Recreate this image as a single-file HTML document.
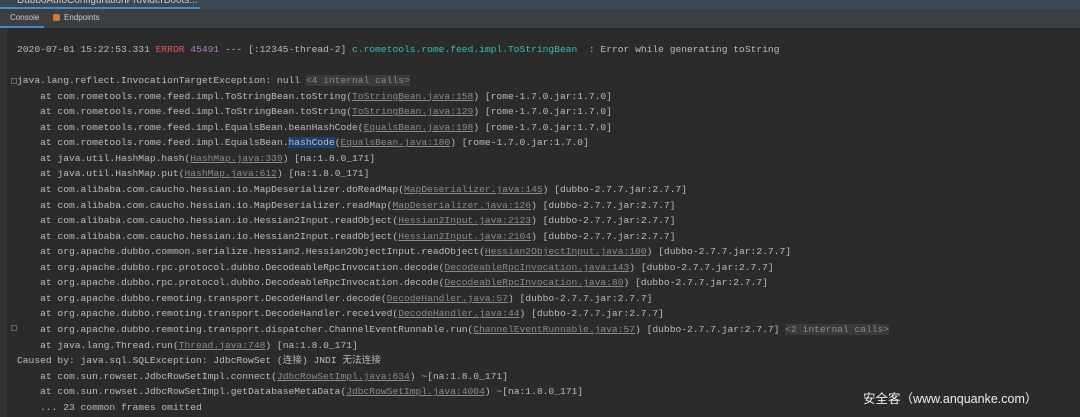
<!DOCTYPE html>
<html><head><meta charset="utf-8"><style>
*{margin:0;padding:0;box-sizing:border-box}
html,body{width:1080px;height:417px;overflow:hidden;background:#2b2b2b}
body{position:relative;font-family:"Liberation Sans",sans-serif}
.title{position:absolute;left:0;top:0;width:1080px;height:9px;background:#3b4754;overflow:hidden}
.title .t{position:absolute;left:17px;top:-5px;font-size:10px;color:#c8ccd0}
.title .ul{position:absolute;left:0;top:7px;width:200px;height:2px;background:#4a88c7}
.tabs{position:absolute;left:0;top:9px;width:1080px;height:19px;background:#3c3f41}
.tabs span{position:absolute;top:4px;font-size:8px;color:#c8ccd0}
.tabs .ul{position:absolute;left:0;top:17px;width:44px;height:2px;background:#4a88c7}
.gut{position:absolute;left:0;top:28px;width:7px;height:389px;background:#313335}
.c{position:absolute;left:17px;top:73px;font-family:"Liberation Mono","Noto Sans CJK SC",monospace;font-size:9.65px;color:#bbbbbb}
.c div{height:15.57px;line-height:15.57px;white-space:pre}
.first{position:absolute;left:17px;top:42px;font-family:"Liberation Mono",monospace;font-size:9.65px;color:#bbbbbb;white-space:pre;line-height:16px}
.r{color:#e0555a}.p{color:#b07fc6}.cy{color:#3fb8b8}
.l{color:#8a8a8a;text-decoration:underline}
.ic{background:#3a3a3a;color:#8a8a8a}
.h{background:#1f3f6c}
.box{position:absolute;width:6px;height:6px;border:1px solid #666}
.wm{position:absolute;left:863px;top:388px;font-family:"Liberation Sans","Noto Sans CJK SC",sans-serif;font-size:12.5px;color:#eee}
</style></head><body>
<div class="title"><span class="t">DubboAutoConfigurationProviderBoots...</span><div class="ul"></div></div>
<div class="tabs"><span style="left:10px">Console</span><span style="left:64px">Endpoints</span><span style="left:53px;top:5px;width:7px;height:7px;background:#d7773a;border-radius:2px"></span><div class="ul"></div></div>
<div class="gut"></div>
<div class="box" style="left:11px;top:78px"></div>
<div class="box" style="left:11px;top:325px"></div>
<div class="first">2020-07-01 15:22:53.331 <span class="r">ERROR</span> <span class="p">45491</span> --- [:12345-thread-2] <span class="cy">c.rometools.rome.feed.impl.ToStringBean</span>  : Error while generating toString</div>
<div class="c"><div>java.lang.reflect.InvocationTargetException: null <span class="ic">&lt;4 internal calls&gt;</span></div><div>    at com.rometools.rome.feed.impl.ToStringBean.toString(<span class="l">ToStringBean.java:158</span>) [rome-1.7.0.jar:1.7.0]</div><div>    at com.rometools.rome.feed.impl.ToStringBean.toString(<span class="l">ToStringBean.java:129</span>) [rome-1.7.0.jar:1.7.0]</div><div>    at com.rometools.rome.feed.impl.EqualsBean.beanHashCode(<span class="l">EqualsBean.java:198</span>) [rome-1.7.0.jar:1.7.0]</div><div>    at com.rometools.rome.feed.impl.EqualsBean.<span class="h">hashCode</span>(<span class="l">EqualsBean.java:180</span>) [rome-1.7.0.jar:1.7.0]</div><div>    at java.util.HashMap.hash(<span class="l">HashMap.java:339</span>) [na:1.8.0_171]</div><div>    at java.util.HashMap.put(<span class="l">HashMap.java:612</span>) [na:1.8.0_171]</div><div>    at com.alibaba.com.caucho.hessian.io.MapDeserializer.doReadMap(<span class="l">MapDeserializer.java:145</span>) [dubbo-2.7.7.jar:2.7.7]</div><div>    at com.alibaba.com.caucho.hessian.io.MapDeserializer.readMap(<span class="l">MapDeserializer.java:126</span>) [dubbo-2.7.7.jar:2.7.7]</div><div>    at com.alibaba.com.caucho.hessian.io.Hessian2Input.readObject(<span class="l">Hessian2Input.java:2123</span>) [dubbo-2.7.7.jar:2.7.7]</div><div>    at com.alibaba.com.caucho.hessian.io.Hessian2Input.readObject(<span class="l">Hessian2Input.java:2104</span>) [dubbo-2.7.7.jar:2.7.7]</div><div>    at org.apache.dubbo.common.serialize.hessian2.Hessian2ObjectInput.readObject(<span class="l">Hessian2ObjectInput.java:100</span>) [dubbo-2.7.7.jar:2.7.7]</div><div>    at org.apache.dubbo.rpc.protocol.dubbo.DecodeableRpcInvocation.decode(<span class="l">DecodeableRpcInvocation.java:143</span>) [dubbo-2.7.7.jar:2.7.7]</div><div>    at org.apache.dubbo.rpc.protocol.dubbo.DecodeableRpcInvocation.decode(<span class="l">DecodeableRpcInvocation.java:80</span>) [dubbo-2.7.7.jar:2.7.7]</div><div>    at org.apache.dubbo.remoting.transport.DecodeHandler.decode(<span class="l">DecodeHandler.java:57</span>) [dubbo-2.7.7.jar:2.7.7]</div><div>    at org.apache.dubbo.remoting.transport.DecodeHandler.received(<span class="l">DecodeHandler.java:44</span>) [dubbo-2.7.7.jar:2.7.7]</div><div>    at org.apache.dubbo.remoting.transport.dispatcher.ChannelEventRunnable.run(<span class="l">ChannelEventRunnable.java:57</span>) [dubbo-2.7.7.jar:2.7.7] <span class="ic">&lt;2 internal calls&gt;</span></div><div>    at java.lang.Thread.run(<span class="l">Thread.java:748</span>) [na:1.8.0_171]</div><div>Caused by: java.sql.SQLException: JdbcRowSet (连接) JNDI 无法连接</div><div>    at com.sun.rowset.JdbcRowSetImpl.connect(<span class="l">JdbcRowSetImpl.java:634</span>) ~[na:1.8.0_171]</div><div>    at com.sun.rowset.JdbcRowSetImpl.getDatabaseMetaData(<span class="l">JdbcRowSetImpl.java:4004</span>) ~[na:1.8.0_171]</div><div>    ... 23 common frames omitted</div></div>
<div class="wm">安全客（www.anquanke.com）</div>
</body></html>
